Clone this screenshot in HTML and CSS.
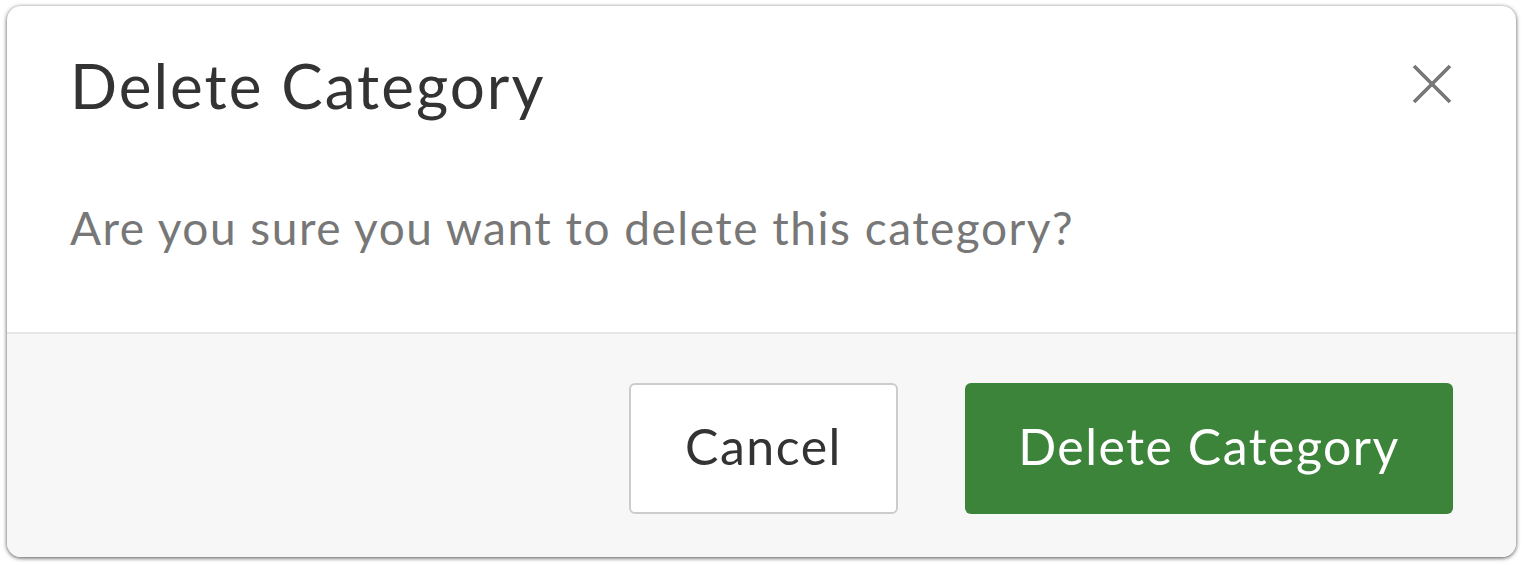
FILE: index.html
```html
<!DOCTYPE html>
<html>
  <head>
    <title>Delete Category</title>
    <link rel="stylesheet" href="styles.css">
  </head>
<body>
  <div class="modal">
    <div class="modal-header">
      <h2 class="modal-title">Delete Category</h2>
      <button class="close" aria-label="Close">
        <svg viewBox="0 0 40 40" width="40" height="40">
          <path d="M2 2 L38 38 M38 2 L2 38" stroke="#777" stroke-width="3.6" fill="none"/>
        </svg>
      </button>
    </div>
    <div class="modal-body">
      <p>Are you sure you want to delete this category?</p>
    </div>
    <div class="modal-footer">
      <button class="btn btn-default">Cancel</button>
      <button class="btn btn-danger">Delete Category</button>
    </div>
  </div>
</body>
</html>
```

FILE: styles.css
```css
/* Dialog shell */
body {
  margin: 0;
  padding: 6px 7px 8px 7px;
  background: #fff;
  font-family: Lato, "Open Sans", sans-serif;
}

.modal {
  height: 551px;
  display: flex;
  flex-direction: column;
  background: #fff;
  border-radius: 14px;
  box-shadow: 0 1px 4px rgba(0, 0, 0, 0.7);
  overflow: hidden;
}

/* Header */
.modal-header {
  display: flex;
  align-items: center;
  justify-content: space-between;
  padding: 44px 64px 0 63px;
}

.modal-title {
  margin: 0;
  font-size: 62px;
  font-weight: 400;
  letter-spacing: 2px;
  line-height: 70px;
  color: #333;
}

.close {
  border: none;
  background: none;
  padding: 0;
  width: 40px;
  height: 40px;
  margin-top: -2px;
  cursor: pointer;
}

/* Body */
.modal-body {
  flex: 1;
  padding: 0 63px;
}

.modal-body p {
  margin: 80px 0 0 0;
  font-size: 46px;
  letter-spacing: 1.5px;
  line-height: 56px;
  color: #777;
}

/* Footer with the two actions */
.modal-footer {
  display: flex;
  justify-content: flex-end;
  gap: 67px;
  height: 225px;
  box-sizing: border-box;
  padding: 49px 63px 0 0;
  background: #f7f7f7;
  border-top: 2px solid #e6e6e6;
}

.btn {
  height: 131px;
  padding: 0 0 6px 0;
  font-family: inherit;
  font-size: 50px;
  letter-spacing: 1.5px;
  border-radius: 6px;
  cursor: pointer;
}

.btn-default {
  width: 269px;
  background: #fff;
  color: #333;
  border: 2px solid #ccc;
}

.btn-danger {
  width: 488px;
  background: #3c8439;
  color: #fff;
  border: none;
}
```
